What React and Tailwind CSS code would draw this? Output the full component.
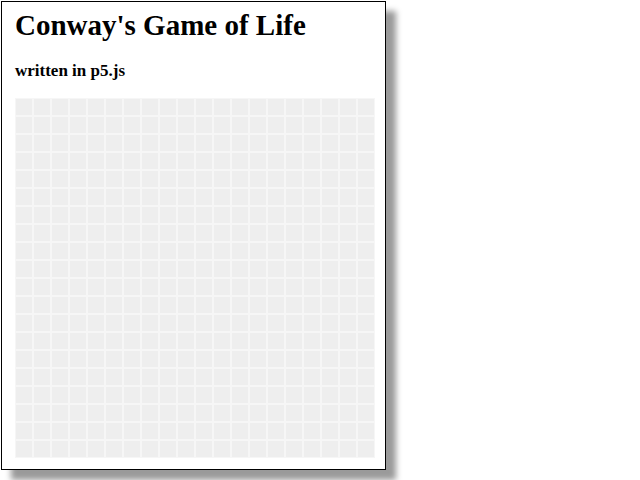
const cells = Array.from({ length: 400 });

export default function App() {
  return (
    <div className="min-h-screen bg-white" style={{ fontFamily: '"Liberation Serif", "Times New Roman", serif' }}>
      <div className="ml-px mt-px w-[385px] h-[469px] border border-black bg-white shadow-[10px_10px_6px_#9a9a9a] pl-[13px] pt-[7px]">
        <h1 className="text-[29px] font-bold leading-[33px] text-black">Conway's Game of Life</h1>
        <h3 className="mt-[19px] text-[17px] font-bold leading-[20px] text-black">written in p5.js</h3>
        <div className="mt-[17px] w-[360px] grid grid-cols-[repeat(20,16px)] gap-[2px] p-px bg-[#f6f6f6]">
          {cells.map((_, i) => (
            <div key={i} className="h-4 bg-[#eeeeee]" />
          ))}
        </div>
      </div>
    </div>
  );
}
